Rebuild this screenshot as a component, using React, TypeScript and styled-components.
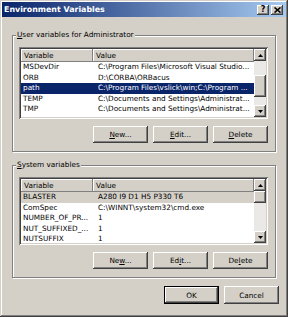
import styled, { createGlobalStyle } from 'styled-components'

const GlobalStyle = createGlobalStyle`
  html, body {
    margin: 0;
    padding: 0;
    background: #d4d0c8;
  }
  body {
    font-family: "DejaVu Sans", Tahoma, Verdana, sans-serif;
    font-size: 7.3px;
    color: #000;
  }
`

const raised = `
  background: #d4d0c8;
  box-shadow: inset -1px -1px #404040, inset 1px 1px #fff, inset -2px -2px #808080, inset 2px 2px #d4d0c8;
`

type Row = { name: string; value: string; state?: 'focus' | 'gray' }

const userRows: Row[] = [
  { name: 'MSDevDir', value: 'C:\\Program Files\\Microsoft Visual Studio...' },
  { name: 'ORB', value: 'D:\\CORBA\\ORBacus' },
  { name: 'path', value: 'C:\\Program Files\\vslick\\win;C:\\Program ...', state: 'focus' },
  { name: 'TEMP', value: 'C:\\Documents and Settings\\Administrat...' },
  { name: 'TMP', value: 'C:\\Documents and Settings\\Administrat...' },
]

const systemRows: Row[] = [
  { name: 'BLASTER', value: 'A280 I9 D1 H5 P330 T6', state: 'gray' },
  { name: 'ComSpec', value: 'C:\\WINNT\\system32\\cmd.exe' },
  { name: 'NUMBER_OF_PR...', value: '1' },
  { name: 'NUT_SUFFIXED_...', value: '1' },
  { name: 'NUTSUFFIX', value: '1' },
]

function Arrow({ up }: { up?: boolean }) {
  return (
    <svg width="5" height="3" viewBox="0 0 5 3">
      <path d={up ? 'M2.5 0 L5 3 L0 3 Z' : 'M0 0 L5 0 L2.5 3 Z'} fill="#000" />
    </svg>
  )
}

function VarList({ rows, height, thumbTop, thumbHeight }: { rows: Row[]; height: number; thumbTop: number; thumbHeight: number }) {
  return (
    <ListView $h={height}>
      <ListBody>
        <HeaderRow>
          <HeaderCell $w={72}>Variable</HeaderCell>
          <HeaderCell>Value</HeaderCell>
        </HeaderRow>
        {rows.map((r) => (
          <ItemRow key={r.name} $state={r.state}>
            <NameCell>{r.name}</NameCell>
            <ValueCell>{r.value}</ValueCell>
          </ItemRow>
        ))}
      </ListBody>
      <ScrollBar>
        <ScrollArrow>
          <Arrow up />
        </ScrollArrow>
        <Track>
          <Thumb style={{ marginTop: thumbTop, height: thumbHeight }} />
        </Track>
        <ScrollArrow>
          <Arrow />
        </ScrollArrow>
      </ScrollBar>
    </ListView>
  )
}

function Buttons({ keys }: { keys: [string, string, string] }) {
  const labels = ['New...', 'Edit...', 'Delete']
  return (
    <ButtonRow>
      {labels.map((label, i) => {
        const k = label.indexOf(keys[i])
        return (
          <PushButton key={label}>
            {label.slice(0, k)}
            <u>{label[k]}</u>
            {label.slice(k + 1)}
          </PushButton>
        )
      })}
    </ButtonRow>
  )
}

export default function App() {
  return (
    <>
      <GlobalStyle />
      <Window>
        <TitleBar>
          <Title>Environment Variables</Title>
          <CaptionButton>?</CaptionButton>
          <CaptionButton>
            <svg width="7" height="6" viewBox="0 0 7 6">
              <path d="M0.5 0.5 L6.5 5.5 M6.5 0.5 L0.5 5.5" stroke="#000" strokeWidth="1.6" />
            </svg>
          </CaptionButton>
        </TitleBar>
        <Body>
          <Group>
            <Legend>
              <u>U</u>ser variables for Administrator
            </Legend>
            <VarList rows={userRows} height={72} thumbTop={14} thumbHeight={22} />
            <Buttons keys={['N', 'E', 'D']} />
          </Group>
          <Group $top={8}>
            <Legend>
              <u>S</u>ystem variables
            </Legend>
            <VarList rows={systemRows} height={68} thumbTop={0} thumbHeight={12} />
            <Buttons keys={['w', 'i', 'l']} />
          </Group>
        </Body>
        <Footer>
          <PushButton $default $h={18}>OK</PushButton>
          <PushButton $h={18}>Cancel</PushButton>
        </Footer>
      </Window>
    </>
  )
}

const Window = styled.div`
  width: 288px;
  height: 317px;
  box-sizing: border-box;
  padding: 2px;
  background: #d4d0c8;
  box-shadow: inset -1px -1px #404040, inset 1px 1px #d4d0c8, inset -2px -2px #808080, inset 2px 2px #fff;
  display: flex;
  flex-direction: column;
`

const TitleBar = styled.div`
  height: 15px;
  flex-shrink: 0;
  display: flex;
  align-items: center;
  gap: 2px;
  padding: 0 3px 0 1px;
  background: linear-gradient(90deg, #0a246a, #a6caf0);
`

const Title = styled.div`
  flex: 1;
  padding-left: 1px;
  color: #fff;
  font-weight: bold;
  font-size: 7.9px;
  white-space: nowrap;
`

const CaptionButton = styled.div`
  width: 12px;
  height: 10px;
  ${raised}
  display: flex;
  align-items: center;
  justify-content: center;
  font-weight: bold;
  font-size: 8px;
  line-height: 10px;
`

const Body = styled.div`
  display: flex;
  flex-direction: column;
  padding: 13px 10px 0 10px;
`

const Group = styled.fieldset<{ $top?: number }>`
  margin: ${({ $top }) => $top ?? 0}px 0 0 0;
  padding: 7px 7px 8px 6px;
  min-width: 0;
  border: 1px solid #808080;
  box-shadow: inset 1px 1px #fff, 1px 1px #fff;
  display: flex;
  flex-direction: column;
  gap: 7px;
`

const Legend = styled.legend`
  margin-left: -3px;
  padding: 0 1px;
  line-height: 10px;
  background: #d4d0c8;
`

const ListView = styled.div<{ $h: number }>`
  height: ${({ $h }) => $h}px;
  box-sizing: border-box;
  padding: 2px;
  background: #fff;
  box-shadow: inset 1px 1px #808080, inset -1px -1px #fff, inset 2px 2px #404040, inset -2px -2px #d4d0c8;
  display: flex;
`

const ListBody = styled.div`
  flex: 1;
  min-width: 0;
  overflow: hidden;
  display: flex;
  flex-direction: column;
`

const HeaderRow = styled.div`
  display: flex;
  height: 13px;
  flex-shrink: 0;
`

const HeaderCell = styled.div<{ $w?: number }>`
  ${({ $w }) => ($w ? `width: ${$w}px;` : 'flex: 1;')}
  box-sizing: border-box;
  padding-left: 3px;
  line-height: 13px;
  background: #d4d0c8;
  box-shadow: inset -1px -1px #808080, inset 1px 1px #fff;
  white-space: nowrap;
`

const ItemRow = styled.div<{ $state?: 'focus' | 'gray' }>`
  display: flex;
  height: 10.6px;
  line-height: 10.6px;
  flex-shrink: 0;
  white-space: nowrap;
  background: ${({ $state }) => ($state === 'focus' ? '#0a246a' : $state === 'gray' ? '#d4d0c8' : 'transparent')};
  color: ${({ $state }) => ($state === 'focus' ? '#fff' : '#000')};
`

const NameCell = styled.div`
  width: 72px;
  box-sizing: border-box;
  padding-left: 2px;
  overflow: hidden;
`

const ValueCell = styled.div`
  flex: 1;
  padding-left: 5px;
  overflow: hidden;
`

const ScrollBar = styled.div`
  width: 12px;
  display: flex;
  flex-direction: column;
`

const ScrollArrow = styled.div`
  height: 12px;
  flex-shrink: 0;
  ${raised}
  display: flex;
  align-items: center;
  justify-content: center;
`

const Track = styled.div`
  flex: 1;
  display: flex;
  flex-direction: column;
  background: #ebe9e5;
`

const Thumb = styled.div`
  flex-shrink: 0;
  ${raised}
`

const ButtonRow = styled.div`
  display: flex;
  justify-content: flex-end;
  gap: 5px;
`

const PushButton = styled.button<{ $default?: boolean; $h?: number }>`
  width: 55px;
  height: ${({ $h }) => $h ?? 17}px;
  padding: 0;
  border: none;
  font: inherit;
  color: #000;
  ${raised}
  ${({ $default }) =>
    $default &&
    'box-shadow: inset 0 0 0 1px #000, inset -2px -2px #404040, inset 2px 2px #fff, inset -3px -3px #808080;'}
`

const Footer = styled.div`
  display: flex;
  justify-content: flex-end;
  gap: 5px;
  padding: 8px 7px 0 0;
`
